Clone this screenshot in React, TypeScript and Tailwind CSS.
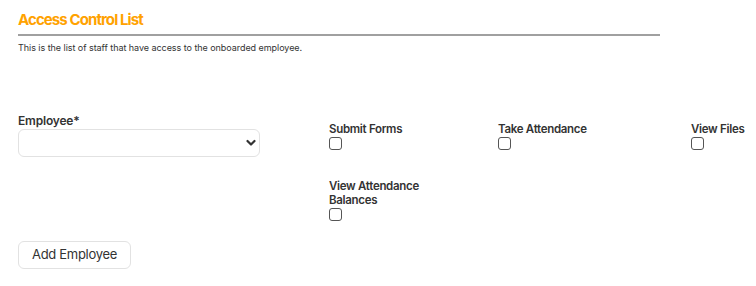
import React from "react";

const Check = () => (
  <input
    type="checkbox"
    className="appearance-none block w-[13px] h-[13px] border border-[#555] rounded-[3px] bg-white m-0"
  />
);

export default function App() {
  const font = { fontFamily: "Inter, 'Noto Sans', sans-serif" };
  return (
    <div className="w-[756px] h-[286px] bg-white overflow-hidden pl-[18px] pt-[10px]" style={font}>
      <h2 className="text-[15px] leading-[20px] font-bold text-[#ffa200] tracking-[-0.9px]">Access Control List</h2>
      <div className="w-[642px] h-[2px] bg-[#a0a0a0] mt-[4px]" />
      <p className="text-[9px] leading-[12px] text-[#333] mt-[6px] tracking-[-0.05px]">
        This is the list of staff that have access to the onboarded employee.
      </p>
      <div className="flex mt-[59px]">
        <div className="w-[242px] flex flex-col">
          <label className="text-[12px] leading-[16px] font-semibold text-[#333] tracking-[-0.2px]">Employee*</label>
          <div className="relative mt-0">
            <select className="appearance-none w-[242px] h-[28px] border border-[#e2e2e2] rounded-[6px] bg-white outline-none" />
            <svg
              className="absolute right-[4px] top-[10px] pointer-events-none"
              width="10"
              height="8"
              viewBox="0 0 10 8"
              fill="none"
            >
              <path d="M1.5 2L5 5.5L8.5 2" stroke="#333" strokeWidth="2.2" strokeLinecap="round" strokeLinejoin="round" />
            </svg>
          </div>
        </div>
        <div className="ml-[69px] mt-[9px] grid grid-cols-[169px_193px_auto] gap-y-[29px] text-[11.5px] leading-[14px] font-semibold text-[#333] tracking-[-0.3px]">
          <div className="flex flex-col gap-[1px]">
            <span>Submit Forms</span>
            <Check />
          </div>
          <div className="flex flex-col gap-[1px]">
            <span>Take Attendance</span>
            <Check />
          </div>
          <div className="flex flex-col gap-[1px]">
            <span>View Files</span>
            <Check />
          </div>
          <div className="flex flex-col gap-[1px] w-[100px]">
            <span>View Attendance Balances</span>
            <Check />
          </div>
        </div>
      </div>
      <button className="mt-[20px] h-[28px] w-[113px] border border-[#e2e2e2] rounded-[6px] bg-white text-[13px] text-[#333] tracking-[-0.3px]">
        Add Employee
      </button>
    </div>
  );
}
